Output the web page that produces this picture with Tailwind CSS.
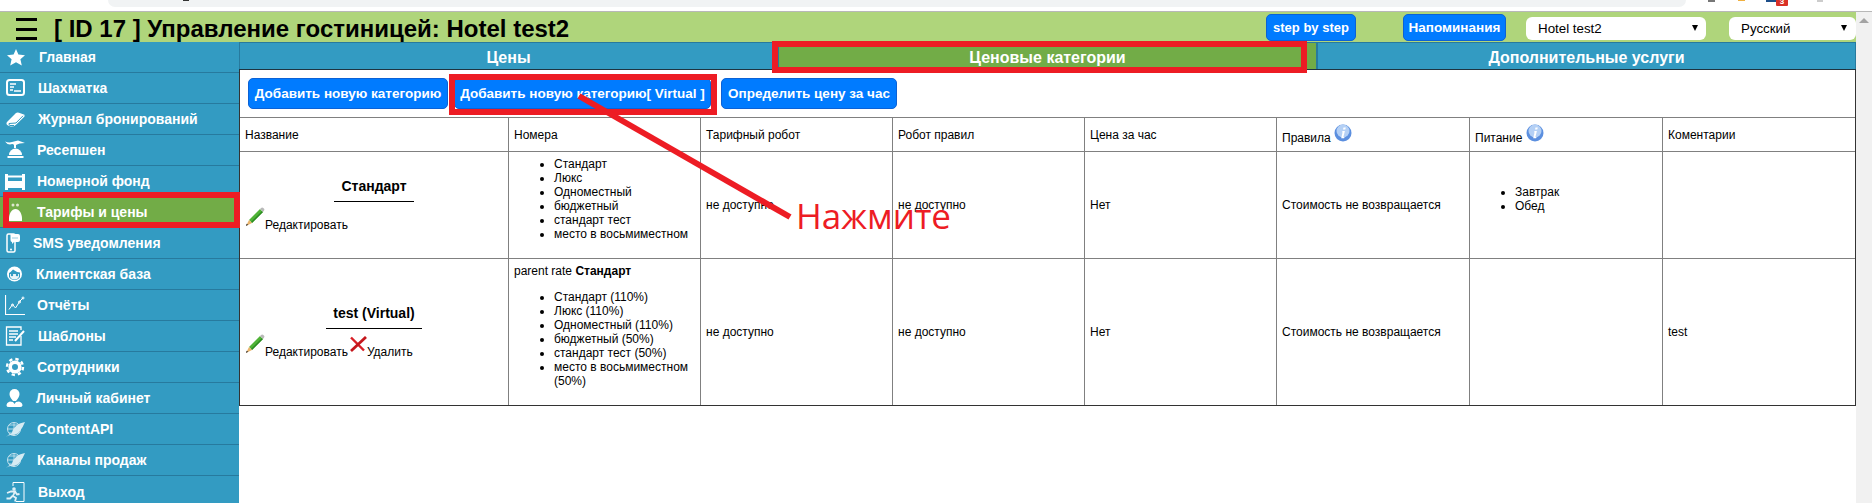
<!DOCTYPE html>
<html lang="ru">
<head>
<meta charset="UTF-8">
<title>Hotel test2</title>
<script src="https://cdn.jsdelivr.net/npm/@tailwindcss/browser@4"></script>
</head>
<body class="bg-white">
<div class="relative flex h-[503px] w-[1872px] overflow-hidden font-['Liberation_Sans',sans-serif] text-[12px] leading-[14px] text-black">

  <!-- page -->
  <div class="flex w-[1856px] flex-col">
    <div class="h-[11px] pl-[108px]">
      <div class="h-[7px] w-[1578px] rounded-b-[10px] bg-[#f1f3f4]"></div>
    </div>

    <!-- header -->
    <div class="flex h-[31px] items-start border-t border-[#b8b8b8] bg-[#afd57b]">
      <div class="ml-[16px] mt-[6px] flex h-[22px] w-[21px] flex-col justify-between">
        <div class="h-[3px] bg-black"></div>
        <div class="h-[3px] bg-black"></div>
        <div class="h-[3px] bg-black"></div>
      </div>
      <h1 class="ml-[17px] mt-[3px] text-[24px] font-bold leading-[27px]">[ ID 17 ] Управление гостиницей: Hotel test2</h1>
      <button class="ml-auto mt-[2px] h-[27px] w-[90px] rounded-[5px] border border-[#0b62d6] bg-[#007bff] text-[13px] font-bold text-white">step by step</button>
      <button class="ml-[47px] mt-[2px] h-[27px] w-[103px] rounded-[5px] border border-[#0b62d6] bg-[#007bff] text-[13.5px] font-bold text-white">Напоминания</button>
      <div class="relative ml-[20px] mt-[5px] h-[23px] w-[180px]">
        <select class="h-full w-full appearance-none rounded-[6px] bg-white pl-[12px] text-[13.33px]"><option>Hotel test2</option></select>
        <span class="absolute left-[166px] top-[8px] h-0 w-0 border-x-[3.5px] border-t-[6px] border-x-transparent border-t-black"></span>
      </div>
      <div class="relative ml-[23px] mt-[5px] h-[23px] w-[127px]">
        <select class="h-full w-full appearance-none rounded-[6px] bg-white pl-[12px] text-[13.33px]"><option>Русский</option></select>
        <span class="absolute left-[112px] top-[8px] h-0 w-0 border-x-[3.5px] border-t-[6px] border-x-transparent border-t-black"></span>
      </div>
    </div>

    <div class="flex min-h-0 flex-1">
      <!-- sidebar -->
      <nav class="w-[239px] shrink-0 bg-[#339bc2] text-[14px] font-bold text-white">
        <a class="flex h-[31px] items-center border-b border-[#277a9e] pl-[5px]">
          <svg class="h-[20px] w-[20px] shrink-0" viewBox="0 0 20 20"><polygon fill="#fff" points="11,2 13.4,7.6 20,8.2 15.4,12.2 16.8,18.5 11,15.2 5.2,18.5 6.6,12.2 2,8.2 8.6,7.6"/></svg>
          <span class="ml-[14px]">Главная</span>
        </a>
        <a class="flex h-[31px] items-center border-b border-[#277a9e] pl-[5px]">
          <svg class="h-[20px] w-[20px] shrink-0" viewBox="0 0 20 20" fill="none" stroke="#fff"><rect x="2" y="2" width="17" height="15" rx="2.5" stroke-width="2"/><path d="M5 6h6M5 9h4M5 12h3M9 13h7" stroke-width="1.5"/></svg>
          <span class="ml-[13px]">Шахматка</span>
        </a>
        <a class="flex h-[31px] items-center border-b border-[#277a9e] pl-[5px]">
          <svg class="h-[20px] w-[20px] shrink-0" viewBox="0 0 20 20"><path fill="#fff" d="M2 13 10.500 4.500Q12 3 14 3.700L19.500 5.800 19.500 7.500 11 15.700Q8.500 18 5.500 17.500L3 16.500Q.5 15 2 13Z"/><path fill="none" stroke="#339bc2" d="M4 14.500 11 14 18 6.800M4 14.500Q3.500 16 5 16.500L9 16.500"/></svg>
          <span class="ml-[13px]">Журнал бронирований</span>
        </a>
        <a class="flex h-[31px] items-center border-b border-[#277a9e] pl-[5px]">
          <svg class="h-[20px] w-[20px] shrink-0" viewBox="0 0 20 20"><path fill="#fff" d="M0 1.500Q4 3 7 2T13 .5L20 3Q14 3 11 5L9 5Q8 3.500 5 4.500 2 4.500 0 1.500Z"/><rect x="9" y="4" width="2" height="4" fill="#fff"/><path fill="#fff" d="M4 15a6.500 6.500 0 0 1 13 0Z"/><rect x="2.500" y="16" width="16" height="2" fill="#fff"/></svg>
          <span class="ml-[12px]">Ресепшен</span>
        </a>
        <a class="flex h-[31px] items-center border-b border-[#277a9e] pl-[5px]">
          <svg class="h-[20px] w-[20px] shrink-0" viewBox="0 0 20 20" fill="#fff"><rect x="0" y="3" width="3" height="16"/><rect x="17" y="3" width="3" height="16"/><rect x="3" y="4.500" width="14" height="2"/><rect x="3" y="10" width="14" height="7"/></svg>
          <span class="ml-[12px]">Номерной фонд</span>
        </a>
        <a class="flex h-[31px] items-center border-b border-[#277a9e] bg-[#72ac47] pl-[5px]">
          <svg class="h-[20px] w-[20px] shrink-0" viewBox="0 0 20 20" fill="#fff"><circle cx="8" cy="3" r="1.500" fill="#dfe8cf"/><circle cx="12.500" cy="3" r="1.500" fill="#dfe8cf"/><path d="M4 19C3.500 11 7 7 10.500 7 14 7 17.500 11 17 19Z"/></svg>
          <span class="ml-[12px]">Тарифы и цены</span>
        </a>
        <a class="flex h-[31px] items-center border-b border-[#277a9e] pl-[5px]">
          <svg class="h-[20px] w-[20px] shrink-0" viewBox="0 0 20 20"><rect x="2" y="1" width="8" height="18" rx="1.500" fill="none" stroke="#fff" stroke-width="1.500"/><circle cx="6" cy="16.500" r="1" fill="#fff"/><path fill="#fff" d="M6 1h7q2 0 2 2v4q0 2-2 2H9l-2 2V9q-1.500 0-1.500-2V3Q5 1 6 1Z"/><path stroke="#339bc2" stroke-dasharray="1 1" d="M7.500 5h6"/></svg>
          <span class="ml-[8px]">SMS уведомления</span>
        </a>
        <a class="flex h-[31px] items-center border-b border-[#277a9e] pl-[5px]">
          <svg class="h-[20px] w-[20px] shrink-0" viewBox="0 0 20 20"><circle cx="9.500" cy="10" r="7.500" fill="#fff"/><path fill="#339bc2" d="M4 9Q6 8 8 5.500 11 8 15 8.500V13Q13 16 9.500 16 6 16 4 13Z"/><path fill="#fff" d="M5 10h9v3Q12.500 15.500 9.500 15.500 6.500 15.500 5 13Z" opacity=".9"/><circle cx="7" cy="11" r="1.200" fill="#339bc2"/><circle cx="12" cy="11" r="1.200" fill="#339bc2"/></svg>
          <span class="ml-[11px]">Клиентская база</span>
        </a>
        <a class="flex h-[31px] items-center border-b border-[#277a9e] pl-[5px]">
          <svg class="h-[20px] w-[20px] shrink-0" viewBox="0 0 20 20" fill="none" stroke="#fff"><path stroke-width="1.200" d="M.5 0V19.500H20"/><path stroke-width="1" d="M4 14.500 7.500 9.500 10.500 13 15 6 18 3"/><circle cx="7.500" cy="10" r="1"/><circle cx="14.500" cy="7" r="1"/><circle cx="18" cy="3" r="1"/></svg>
          <span class="ml-[12px]">Отчёты</span>
        </a>
        <a class="flex h-[31px] items-center border-b border-[#277a9e] pl-[5px]">
          <svg class="h-[20px] w-[20px] shrink-0" viewBox="0 0 20 20" fill="none" stroke="#fff"><path stroke-width="1.300" d="M16 10V19H1.500V1H16V4"/><path stroke-width="1.400" d="M4 5h9M4 8h9M4 11h7M4 14h4"/><path stroke-width="2" d="M10 15 19 5"/></svg>
          <span class="ml-[13px]">Шаблоны</span>
        </a>
        <a class="flex h-[31px] items-center border-b border-[#277a9e] pl-[5px]">
          <svg class="h-[20px] w-[20px] shrink-0" viewBox="0 0 20 20" fill="none" stroke="#fff"><circle cx="10" cy="10" r="4.800" stroke-width="3.600"/><circle cx="10" cy="10" r="8" stroke-width="2.400" stroke-dasharray="3.300 3"/></svg>
          <span class="ml-[12px]">Сотрудники</span>
        </a>
        <a class="flex h-[31px] items-center border-b border-[#277a9e] pl-[5px]">
          <svg class="h-[20px] w-[20px] shrink-0" viewBox="0 0 20 20" fill="#fff"><path d="M9.500 1a5 5 0 0 1 5 5Q14.500 9 11 13H8Q4.500 9 4.500 6a5 5 0 0 1 5-5Z"/><path d="M5 13.500 8 14 9.500 16 11 14 14 13.500Q17.500 14.500 17.500 17.500 17 19 15 19H4Q1.500 19 1.500 17.500 1.500 14.500 5 13.500Z"/></svg>
          <span class="ml-[11px]">Личный кабинет</span>
        </a>
        <a class="flex h-[31px] items-center border-b border-[#277a9e] pl-[5px]">
          <svg class="h-[20px] w-[20px] shrink-0 opacity-80" viewBox="0 0 20 20" fill="none" stroke="#fff"><circle cx="9" cy="10" r="6.500" stroke-width=".9"/><path stroke-width=".8" d="M2.500 10h13M9 3.500v13M4 6h10M4 14h10"/><path fill="#fff" stroke="none" d="M1 18Q3 16 6 16 12 16 15 12 18 8 20 3 14 4 11 7 7 11 7 14 4 15 1 18Z"/></svg>
          <span class="ml-[12px]">ContentAPI</span>
        </a>
        <a class="flex h-[31px] items-center border-b border-[#277a9e] pl-[5px]">
          <svg class="h-[20px] w-[20px] shrink-0 opacity-80" viewBox="0 0 20 20" fill="none" stroke="#fff"><circle cx="9" cy="10" r="6.500" stroke-width=".9"/><path stroke-width=".8" d="M2.500 10h13M9 3.500v13M4 6h10M4 14h10"/><path fill="#fff" stroke="none" d="M1 18Q3 16 6 16 12 16 15 12 18 8 20 3 14 4 11 7 7 11 7 14 4 15 1 18Z"/></svg>
          <span class="ml-[12px]">Каналы продаж</span>
        </a>
        <a class="flex h-[31px] items-center pl-[5px]">
          <svg class="h-[20px] w-[20px] shrink-0" viewBox="0 0 20 20" fill="none" stroke="#fff"><path stroke-width="1" d="M8 4V.5H19V19.500H11"/><circle cx="9" cy="7" r="1.800" fill="#fff" opacity=".85" stroke="none"/><path stroke-width="1.800" opacity=".85" d="M2 11 6 9.500H10L8 14 11 16 10 19.500M7.500 14 5 16.500H1.500M10 9.500 12 12.500 14.500 12"/></svg>
          <span class="ml-[13px]">Выход</span>
        </a>
      </nav>

      <!-- content -->
      <main class="w-[1617px]">
        <div class="flex h-[28px] border-b border-[#1f3440] text-[16px] font-bold text-white">
          <div class="flex w-[539px] items-center justify-center border border-b-0 border-[#277a9e] bg-[#339bc2] pt-[3px]">Цены</div>
          <div class="flex w-[539px] items-center justify-center border border-b-0 border-[#277a9e] bg-[#72ac47] pt-[3px]">Ценовые категории</div>
          <div class="flex w-[539px] items-center justify-center border border-b-0 border-[#277a9e] bg-[#339bc2] pt-[3px]">Дополнительные услуги</div>
        </div>

        <div class="border-x border-b border-[#333]">
          <div class="flex h-[47px] gap-[6px] pl-[8px] pt-[8px] text-[13.5px] font-bold text-white">
            <button class="h-[31px] w-[200px] rounded-[5px] border border-[#0b62d6] bg-[#007bff]">Добавить новую категорию</button>
            <button class="h-[31px] w-[257px] rounded-[5px] border border-[#0b62d6] bg-[#007bff]">Добавить новую категорию[ Virtual ]</button>
            <button class="ml-[4px] h-[31px] w-[176px] rounded-[5px] border border-[#0b62d6] bg-[#007bff]">Определить цену за час</button>
          </div>

          <table class="w-full table-fixed border-separate border-spacing-0">
            <colgroup>
              <col class="w-[268px]"><col class="w-[192px]"><col class="w-[192px]"><col class="w-[192px]"><col class="w-[192px]"><col class="w-[193px]"><col class="w-[193px]"><col class="w-[193px]">
            </colgroup>
            <tr class="h-[34px]">
              <td class="border-t border-[#808080] pl-[5px]">Название</td>
              <td class="border-l border-t border-[#808080] pl-[5px]">Номера</td>
              <td class="border-l border-t border-[#808080] pl-[5px]">Тарифный робот</td>
              <td class="border-l border-t border-[#808080] pl-[5px]">Робот правил</td>
              <td class="border-l border-t border-[#808080] pl-[5px]">Цена за час</td>
              <td class="border-l border-t border-[#808080] pl-[5px]">Правила
                <svg class="inline h-[18px] w-[18px] align-baseline" viewBox="0 0 18 18"><circle cx="9" cy="9" r="8.500" fill="#5b8fdf"/><circle cx="9" cy="7" r="6.500" fill="#b4d0f5"/><path fill="#fff" d="M9.500 3.500h2.300l-.5 2H9ZM8.700 7h2.200l-1.500 6h1.100l-.4 1.300H7.200l1.400-6H7.800Z"/></svg></td>
              <td class="border-l border-t border-[#808080] pl-[5px]">Питание
                <svg class="inline h-[18px] w-[18px] align-baseline" viewBox="0 0 18 18"><circle cx="9" cy="9" r="8.500" fill="#5b8fdf"/><circle cx="9" cy="7" r="6.500" fill="#b4d0f5"/><path fill="#fff" d="M9.500 3.500h2.300l-.5 2H9ZM8.700 7h2.200l-1.500 6h1.100l-.4 1.300H7.200l1.400-6H7.800Z"/></svg></td>
              <td class="border-l border-t border-[#808080] pl-[5px]">Коментарии</td>
            </tr>
            <tr class="h-[107px]">
              <td class="border-t border-[#808080]">
                <h4 class="text-center text-[14px] font-bold leading-[15px]">Стандарт</h4>
                <hr class="mx-auto mb-[5px] mt-[7px] w-[80px] border-black">
                <div class="pl-[5px]"><svg class="inline h-[20px] w-[20px] align-[2px]" viewBox="0 0 20 20"><path fill="#4fb336" d="M4 13 15 2l3 3L7 16Z"/><path fill="#2a8a22" d="M6 15 17 4l1 1L7 16Z"/><path fill="#b9b9b9" d="m15 2 1.500-1.200q1-.6 1.800.2l.8.8q.7.8 0 1.700L18 5Z"/><path fill="#e9b36a" d="M4 13 7 16 1 19Z"/><path fill="#333" d="M1 19l.6-2.300 1.700 1.100Z"/></svg>Редактировать</div>
              </td>
              <td class="border-l border-t border-[#808080] pl-[5px]">
                <ul class="mb-[12px] list-disc pl-[40px]"><li>Стандарт</li><li>Люкс</li><li>Одноместный</li><li>бюджетный</li><li>стандарт тест</li><li>место в восьмиместном</li></ul>
              </td>
              <td class="border-l border-t border-[#808080] pl-[5px]">не доступно</td>
              <td class="border-l border-t border-[#808080] pl-[5px]">не доступно</td>
              <td class="border-l border-t border-[#808080] pl-[5px]">Нет</td>
              <td class="border-l border-t border-[#808080] pl-[5px]">Стоимость не возвращается</td>
              <td class="border-l border-t border-[#808080] pl-[5px]">
                <ul class="mb-[12px] list-disc pl-[40px]"><li>Завтрак</li><li>Обед</li></ul>
              </td>
              <td class="border-l border-t border-[#808080] pl-[5px]"></td>
            </tr>
            <tr class="h-[147px]">
              <td class="border-t border-[#808080]">
                <h4 class="text-center text-[14px] font-bold leading-[15px]">test (Virtual)</h4>
                <hr class="mx-auto mb-[5px] mt-[7px] w-[96px] border-black">
                <div class="pl-[5px]"><svg class="inline h-[20px] w-[20px] align-[2px]" viewBox="0 0 20 20"><path fill="#4fb336" d="M4 13 15 2l3 3L7 16Z"/><path fill="#2a8a22" d="M6 15 17 4l1 1L7 16Z"/><path fill="#b9b9b9" d="m15 2 1.500-1.200q1-.6 1.800.2l.8.8q.7.8 0 1.700L18 5Z"/><path fill="#e9b36a" d="M4 13 7 16 1 19Z"/><path fill="#333" d="M1 19l.6-2.300 1.700 1.100Z"/></svg>Редактировать<svg class="ml-[1px] inline h-[18px] w-[18px] align-[2px]" viewBox="0 0 18 18"><path fill="none" stroke="#d81f26" stroke-width="2.400" d="M2 1.500 15 14.500"/><path fill="none" stroke="#c4161c" stroke-width="2.800" d="M17 1 2 15"/></svg>Удалить</div>
              </td>
              <td class="border-l border-t border-[#808080] pl-[5px]">
                <p>parent rate <b>Стандарт</b></p>
                <ul class="mb-[12px] mt-[12px] list-disc pl-[40px]"><li>Стандарт (110%)</li><li>Люкс (110%)</li><li>Одноместный (110%)</li><li>бюджетный (50%)</li><li>стандарт тест (50%)</li><li>место в восьмиместном (50%)</li></ul>
              </td>
              <td class="border-l border-t border-[#808080] pl-[5px]">не доступно</td>
              <td class="border-l border-t border-[#808080] pl-[5px]">не доступно</td>
              <td class="border-l border-t border-[#808080] pl-[5px]">Нет</td>
              <td class="border-l border-t border-[#808080] pl-[5px]">Стоимость не возвращается</td>
              <td class="border-l border-t border-[#808080] pl-[5px]"></td>
              <td class="border-l border-t border-[#808080] pl-[5px]">test</td>
            </tr>
          </table>
        </div>
      </main>
    </div>
  </div>

  <!-- scrollbar -->
  <div class="mt-[11px] flex w-[16px] justify-center border-t border-[#b8b8b8] bg-[#f1f1f1] pt-[6px]">
    <span class="h-0 w-0 border-x-[5px] border-b-[5px] border-x-transparent border-b-[#a3a3a3]"></span>
  </div>

  <!-- browser toolbar fragments -->
  <span class="absolute left-[183px] top-0 h-[1px] w-[6px] bg-[#333]"></span>
  <span class="absolute left-[1708px] top-0 h-[2px] w-[7px] bg-[#777]"></span>
  <span class="absolute left-[1738px] top-0 h-[1px] w-[7px] bg-[#f0b040]"></span>
  <span class="absolute left-[1766px] top-0 h-[2px] w-[10px] bg-[#1d4e89]"></span>
  <span class="absolute left-[1776px] top-0 flex h-[6px] w-[12px] items-end justify-center overflow-hidden rounded-b-[1px] bg-[#d93025] text-[8px] font-bold leading-[8px] text-white">3</span>
  <span class="absolute left-[1817px] top-0 h-[2px] w-[6px] bg-[#ccc]"></span>

  <!-- red annotations -->
  <div class="pointer-events-none absolute left-[3px] top-[192px] h-[36px] w-[237px] border-[6px] border-[#ed1c24]"></div>
  <div class="pointer-events-none absolute left-[772px] top-[41px] h-[32px] w-[535px] border-[6px] border-[#ed1c24]"></div>
  <div class="pointer-events-none absolute left-[449px] top-[74px] h-[41px] w-[268px] border-[6px] border-[#ed1c24]"></div>
  <svg class="pointer-events-none absolute left-0 top-0" width="1872" height="503"><line x1="579" y1="96" x2="790" y2="217" stroke="#ed1c24" stroke-width="6"/></svg>
  <span class="absolute left-[796px] top-[194px] font-['Open_Sans',sans-serif] text-[35px] leading-[43px] text-[#ed1c24]">Нажмите</span>
</div>
</body>
</html>
